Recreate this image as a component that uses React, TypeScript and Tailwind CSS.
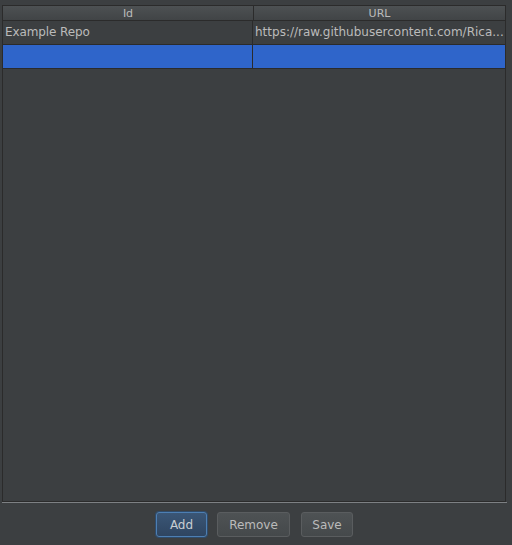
import React from "react";

const rows = [
  { id: "Example Repo", url: "https://raw.githubusercontent.com/Rica..." },
  { id: "", url: "", selected: true },
];

export default function App() {
  return (
    <div className="flex h-[545px] w-[512px] flex-col bg-[#3c3f41] pl-[2px] pr-[6px] pt-[5px] font-['DejaVu_Sans',sans-serif] text-[#bbbbbb]">
      <div className="flex h-[497px] flex-col border border-[#2b2b2b] bg-[#3c3f41]">
        <div className="flex h-[15px] shrink-0 border-b border-[#2b2b2b] bg-gradient-to-b from-[#4d5153] to-[#414446] text-[11px] leading-[15px]">
          <div className="w-[251px] border-r border-[#2b2b2b] text-center">Id</div>
          <div className="flex-1 text-center">URL</div>
        </div>
        {rows.map((r, i) => (
          <div
            key={i}
            className={`flex h-[24px] shrink-0 border-b border-[#2b2b2b] text-[12px] leading-[23px] ${
              r.selected ? "bg-[#2f65ca]" : ""
            }`}
          >
            <div className="w-[250px] truncate border-r border-[#2b2b2b] pl-[2px] tracking-[-0.1px]">{r.id}</div>
            <div className="min-w-0 flex-1 truncate pl-[2px]">{r.url}</div>
          </div>
        ))}
      </div>
      <div className="h-px w-[505px] bg-[#7d8083]" />
      <div className="mt-[9px] flex justify-center gap-[10px] pl-[1px] text-[12px]">
        <button className="h-[25px] w-[51px] rounded-[3px] border border-[#4d7fb3] bg-gradient-to-b from-[#3a5676] to-[#2f4561] text-[#c8cdd2] shadow-[0_0_0_1px_#2f4b6b]">
          Add
        </button>
        <button className="h-[25px] w-[73px] rounded-[3px] border border-[#5a5d5f] bg-gradient-to-b from-[#4e5254] to-[#45494b] text-[#bbbbbb]">
          Remove
        </button>
        <button className="ml-px h-[25px] w-[52px] rounded-[3px] border border-[#5a5d5f] bg-gradient-to-b from-[#4e5254] to-[#45494b] text-[#bbbbbb]">
          Save
        </button>
      </div>
    </div>
  );
}
